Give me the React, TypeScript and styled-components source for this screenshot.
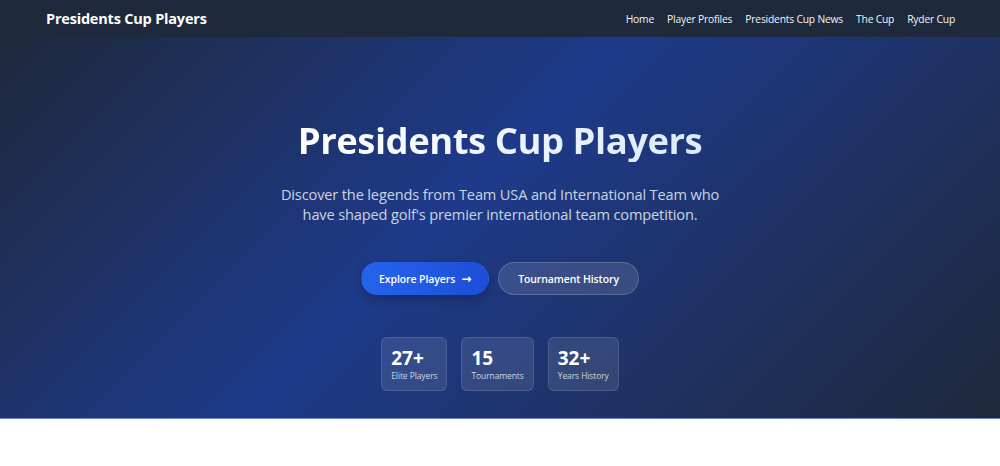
import styled, { createGlobalStyle } from "styled-components";

const GlobalStyle = createGlobalStyle`
  * { box-sizing: border-box; }
  body {
    margin: 0;
    font-family: "Open Sans", "Noto Sans", sans-serif;
    background: #ffffff;
  }
`;

const Nav = styled.nav`
  height: 37px;
  background: #1e293b;
  display: flex;
  align-items: center;
  justify-content: space-between;
  padding: 0 45px 0 46px;
`;

const Brand = styled.div`
  color: #ffffff;
  font-size: 14.5px;
  font-weight: 700;
  letter-spacing: -0.2px;
`;

const NavLinks = styled.ul`
  display: flex;
  gap: 13px;
  list-style: none;
  margin: 0;
  padding: 0;
`;

const NavLink = styled.li`
  color: #f1f5f9;
  font-size: 10.3px;
  font-weight: 500;
  letter-spacing: -0.2px;
`;

const Hero = styled.section`
  height: 382px;
  background: linear-gradient(135deg, #1e293b 0%, #1e3a8a 45%, #1e293b 100%);
  border-bottom: 1px solid #6b86c6;
  display: flex;
  flex-direction: column;
  align-items: center;
  padding-top: 81px;
  text-align: center;
`;

const Title = styled.h1`
  margin: 0;
  font-size: 36.5px;
  font-weight: 700;
  letter-spacing: -0.5px;
  line-height: 44px;
  background: linear-gradient(90deg, #ffffff, #dbeafe);
  -webkit-background-clip: text;
  background-clip: text;
  color: transparent;
`;

const Lead = styled.p`
  margin: 22px 0 0;
  max-width: 460px;
  color: #cbd5e1;
  font-size: 14.6px;
  line-height: 20px;
  letter-spacing: -0.15px;
`;

const Actions = styled.div`
  display: flex;
  gap: 9px;
  margin-top: 38px;
`;

const Button = styled.button<{ $primary?: boolean }>`
  height: 33px;
  padding: 0 ${(p) => (p.$primary ? "17px" : "19px")};
  border-radius: 999px;
  font-family: inherit;
  font-size: 10.5px;
  font-weight: 600;
  letter-spacing: -0.1px;
  color: #ffffff;
  display: flex;
  align-items: center;
  gap: 6px;
  border: 1px solid
    ${(p) => (p.$primary ? "transparent" : "rgba(255,255,255,0.18)")};
  background: ${(p) =>
    p.$primary
      ? "linear-gradient(90deg, #2563eb, #1d4ed8)"
      : "rgba(255,255,255,0.12)"};
  box-shadow: ${(p) =>
    p.$primary ? "0 4px 10px rgba(15,23,42,0.35)" : "none"};
`;

const Arrow = styled.span`
  font-family: "DejaVu Sans", sans-serif;
  font-size: 12px;
  line-height: 1;
`;

const Stats = styled.div`
  display: flex;
  gap: 14px;
  margin-top: 42px;
`;

const StatCard = styled.div`
  height: 54px;
  padding: 8px 9px 0;
  border-radius: 6px;
  background: rgba(255, 255, 255, 0.1);
  border: 1px solid rgba(255, 255, 255, 0.12);
  text-align: left;
`;

const StatValue = styled.div`
  color: #ffffff;
  font-size: 19px;
  font-weight: 700;
  line-height: 24px;
`;

const StatLabel = styled.div`
  color: #cbd5e1;
  font-size: 8.5px;
  line-height: 12px;
  letter-spacing: -0.1px;
`;

const links = ["Home", "Player Profiles", "Presidents Cup News", "The Cup", "Ryder Cup"];

const stats = [
  { value: "27+", label: "Elite Players" },
  { value: "15", label: "Tournaments" },
  { value: "32+", label: "Years History" },
];

export default function App() {
  return (
    <>
      <GlobalStyle />
      <Nav>
        <Brand>Presidents Cup Players</Brand>
        <NavLinks>
          {links.map((l) => (
            <NavLink key={l}>{l}</NavLink>
          ))}
        </NavLinks>
      </Nav>
      <Hero>
        <Title>Presidents Cup Players</Title>
        <Lead>
          Discover the legends from Team USA and International Team who have
          shaped golf's premier international team competition.
        </Lead>
        <Actions>
          <Button $primary>
            Explore Players <Arrow>→</Arrow>
          </Button>
          <Button>Tournament History</Button>
        </Actions>
        <Stats>
          {stats.map((s) => (
            <StatCard key={s.label}>
              <StatValue>{s.value}</StatValue>
              <StatLabel>{s.label}</StatLabel>
            </StatCard>
          ))}
        </Stats>
      </Hero>
    </>
  );
}
